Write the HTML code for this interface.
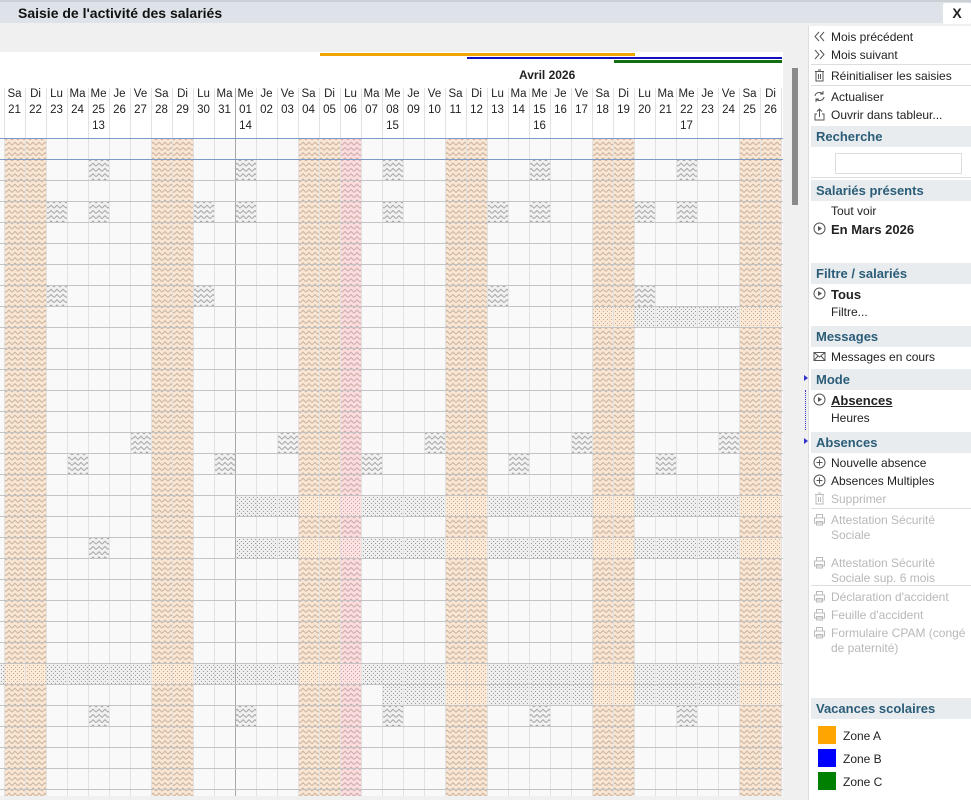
<!DOCTYPE html>
<html><head><meta charset="utf-8">
<style>
*{margin:0;padding:0;box-sizing:border-box}
html,body{width:971px;height:800px;overflow:hidden}
body{background:#f0f0f0;font-family:"Liberation Sans",sans-serif;position:relative;font-size:12px;color:#222}
.abs{position:absolute}
#title{left:0;top:0;width:971px;height:23px;background:#dde3e8;border-top:2px solid #c9d0d6}
#title span{position:absolute;left:18px;top:3px;font-weight:bold;font-size:14px;color:#111}
#x{right:0;top:1px;width:28px;height:21px;background:#fff;font-weight:bold;font-size:14px;text-align:center;line-height:21px;border-radius:2px}
#grid{left:0;top:52px;width:783px;height:744px;background:#fff;overflow:hidden}
.hd{position:absolute;font-size:11.5px;color:#222;width:21px;text-align:center}
#side{left:808px;top:26px;width:163px;height:774px;background:#fff;border-left:1px solid #ddd;overflow:hidden}
.it{position:absolute;left:22px;font-size:12px;white-space:nowrap;line-height:15px}
.dis{color:#b8b8b8}
.sh{position:absolute;left:2px;width:161px;height:21px;background:#e8ecef;color:#2b5d78;font-weight:bold;font-size:13px;padding-left:5px;line-height:21px}
.sep{position:absolute;left:2px;width:161px;height:1px;background:#ddd}
.ic{position:absolute;left:4px;width:13px;height:13px}
.sw{position:absolute;left:9px;width:18px;height:18px}
</style></head><body>
<div id="title" class="abs"><span>Saisie de l'activité des salariés</span><div id="x" class="abs">X</div></div>
<div id="grid" class="abs">
<div class="abs" style="left:320px;top:1px;width:315px;height:3px;background:#f0a500"></div>
<div class="abs" style="left:467px;top:5px;width:315px;height:2px;background:#1010c0"></div>
<div class="abs" style="left:614px;top:8px;width:168px;height:3px;background:#107010"></div>
<div class="abs" style="left:519px;top:16px;font-weight:bold;font-size:12px">Avril 2026</div>
<div id="hdr"></div>
<svg id="sv" class="abs" style="left:0;top:0" width="783" height="744"></svg>
</div>
<div class="abs" style="left:792px;top:68px;width:6px;height:137px;background:#8a8a8a"></div>
<div id="side" class="abs">
<svg class="ic" style="top:4px" viewBox="0 0 13 13"><path d="M6 2L2 6.5 6 11M11 2L7 6.5 11 11" fill="none" stroke="#555"/></svg><div class="it" style="top:4px">Mois précédent</div>
<svg class="ic" style="top:22px" viewBox="0 0 13 13"><path d="M2 2L6 6.5 2 11M7 2L11 6.5 7 11" fill="none" stroke="#555"/></svg><div class="it" style="top:22px">Mois suivant</div>
<div class="sep" style="top:38px"></div>
<svg class="ic" style="top:43px" viewBox="0 0 13 13"><path d="M2 2.5H11M5 1H8M3 2.5V12H10V2.5M5.5 5V10M7.5 5V10" fill="none" stroke="#555"/></svg><div class="it" style="top:43px">Réinitialiser les saisies</div>
<div class="sep" style="top:59px"></div>
<svg class="ic" style="top:64px" viewBox="0 0 13 13"><path d="M2 6A4.5 4 0 0 1 10 4M11 7A4.5 4 0 0 1 3 9M10 1V4H7M3 12V9H6" fill="none" stroke="#555"/></svg><div class="it" style="top:64px">Actualiser</div>
<svg class="ic" style="top:82px" viewBox="0 0 13 13"><path d="M4 6H2V12H11V6H9M6.5 9V1M4 3.5L6.5 1 9 3.5" fill="none" stroke="#555"/></svg><div class="it" style="top:82px">Ouvrir dans tableur...</div>
<div class="sh" style="top:100px">Recherche</div>
<div class="abs" style="left:26px;top:127px;width:127px;height:21px;border:1px solid #ddd;background:#fff"></div>
<div class="sep" style="top:151px"></div>
<div class="sh" style="top:154px">Salariés présents</div>
<div class="it" style="top:178px">Tout voir</div>
<svg class="ic" style="top:196px" viewBox="0 0 13 13"><circle cx="6.5" cy="6.5" r="5.5" fill="none" stroke="#555"/><path d="M5 4L9 6.5 5 9Z" fill="#555"/></svg><div class="it" style="top:196px;font-weight:bold;font-size:13px">En Mars 2026</div>
<div class="sh" style="top:237px">Filtre / salariés</div>
<svg class="ic" style="top:261px" viewBox="0 0 13 13"><circle cx="6.5" cy="6.5" r="5.5" fill="none" stroke="#555"/><path d="M5 4L9 6.5 5 9Z" fill="#555"/></svg><div class="it" style="top:261px;font-weight:bold;font-size:13px">Tous</div>
<div class="it" style="top:279px">Filtre...</div>
<div class="sh" style="top:300px">Messages</div>
<svg class="ic" style="top:324px" viewBox="0 0 13 13"><path d="M1 2.5H12V10.5H1ZM1 2.5L6.5 7 12 2.5M1 10.5L5 6M12 10.5L8 6" fill="none" stroke="#555"/></svg><div class="it" style="top:324px">Messages en cours</div>
<div class="sh" style="top:343px">Mode</div>
<svg class="ic" style="top:367px" viewBox="0 0 13 13"><circle cx="6.5" cy="6.5" r="5.5" fill="none" stroke="#555"/><path d="M5 4L9 6.5 5 9Z" fill="#555"/></svg><div class="it" style="top:367px;font-weight:bold;font-size:13px;text-decoration:underline">Absences</div>
<div class="it" style="top:385px">Heures</div>
<div class="sh" style="top:406px">Absences</div>
<svg class="ic" style="top:430px" viewBox="0 0 13 13"><circle cx="6.5" cy="6.5" r="5.5" fill="none" stroke="#555"/><path d="M6.5 3.5V9.5M3.5 6.5H9.5" stroke="#555"/></svg><div class="it" style="top:430px">Nouvelle absence</div>
<svg class="ic" style="top:448px" viewBox="0 0 13 13"><circle cx="6.5" cy="6.5" r="5.5" fill="none" stroke="#555"/><path d="M6.5 3.5V9.5M3.5 6.5H9.5" stroke="#555"/></svg><div class="it" style="top:448px">Absences Multiples</div>
<svg class="ic" style="top:466px" viewBox="0 0 13 13"><path d="M2 2.5H11M5 1H8M3 2.5V12H10V2.5M5.5 5V10M7.5 5V10" fill="none" stroke="#bbb"/></svg><div class="it dis" style="top:466px">Supprimer</div>
<div class="sep" style="top:482px"></div>
<div id="pr"></div>
<div class="it dis" style="top:487px">Attestation Sécurité<br>Sociale</div>
<div class="it dis" style="top:530px">Attestation Sécurité<br>Sociale sup. 6 mois</div>
<div class="sep" style="top:559px"></div>
<div class="it dis" style="top:564px">Déclaration d'accident</div>
<div class="it dis" style="top:582px">Feuille d'accident</div>
<div class="it dis" style="top:600px">Formulaire CPAM (congé<br>de paternité)</div>
<div class="sh" style="top:672px">Vacances scolaires</div>
<div class="sw" style="top:700px;background:#ffa500"></div><div class="it" style="left:34px;top:703px">Zone A</div>
<div class="sw" style="top:723px;background:#0000ff"></div><div class="it" style="left:34px;top:726px">Zone B</div>
<div class="sw" style="top:746px;background:#008000"></div><div class="it" style="left:34px;top:749px">Zone C</div>
</div>
<div class="abs" style="left:804px;top:375px;width:0;height:0;border-left:4px solid #33c;border-top:3px solid transparent;border-bottom:3px solid transparent"></div>
<div class="abs" style="left:804px;top:438px;width:0;height:0;border-left:4px solid #33c;border-top:3px solid transparent;border-bottom:3px solid transparent"></div>
<div class="abs" style="left:805px;top:390px;height:40px;border-left:1px dotted #33c"></div>
<script>
var names=["Sa","Di","Lu","Ma","Me","Je","Ve"];
var nums=[21,22,23,24,25,26,27,28,29,30,31];for(var d=1;d<=26;d++)nums.push(d);
var wk={4:"13",11:"14",18:"15",25:"16",32:"17"};
var h="";
for(var i=0;i<37;i++){var x=4+21*i;var n=nums[i];var s=(n<10?"0":"")+n;
h+='<div class="hd" style="left:'+x+'px;top:36px">'+names[i%7]+'</div>';
h+='<div class="hd" style="left:'+x+'px;top:52px">'+s+'</div>';
if(wk[i])h+='<div class="hd" style="left:'+x+'px;top:68px">'+wk[i]+'</div>';}
document.getElementById("hdr").innerHTML=h;
var pp="";[487,530,564,582,600].forEach(function(t){pp+='<svg class="ic" style="top:'+t+'px" viewBox="0 0 13 13"><path d="M3.5 5V1.5H9.5V5M1.5 5H11.5V10H1.5ZM3.5 8.5H9.5V12H3.5Z" fill="none" stroke="#bbb"/></svg>'});
document.getElementById("pr").innerHTML=pp;
var Y0=86,RH=21,NR=34;
function zz(id,bg,st){return '<pattern id="'+id+'" width="6" height="5.25" patternUnits="userSpaceOnUse"><rect width="6" height="5.25" fill="'+bg+'"/><path d="M0 4L3 1 6 4" fill="none" stroke="'+st+'" stroke-width="1"/></pattern>';}
function dd(id,bg,st){return '<pattern id="'+id+'" width="4" height="4" patternUnits="userSpaceOnUse"><rect width="4" height="4" fill="'+bg+'"/><rect x="1" y="1" width="1" height="1" fill="'+st+'"/><rect x="3" y="3" width="1" height="1" fill="'+st+'"/></pattern>';}
var sv='<defs>'+zz("zo","#fae6d2","#c4b19c")+zz("zp","#fcdcdc","#c7a8a8")+zz("zg","#f2f2f2","#a2a2a2")+dd("dg","#efefef","#9a9a9a")+dd("do","#fbe9d6","#c0ac98")+dd("dp","#fde0e0","#c0a8a8")+'</defs>';
sv+='<rect x="0" y="'+Y0+'" width="783" height="700" fill="#f9f9f9"/>';
var grayZ={1:[4,11,18,25,32],3:[2,4,9,11,16,18,23,25,30,32],7:[2,9,23,30],14:[6,13,20,27,34],15:[3,10,17,24,31],19:[4],27:[4,11,18,25,32]};
var dotted={8:[28,36],17:[11,36],19:[11,36],25:[0,36],26:[18,36]};
function wkend(i){return i%7==0||i%7==1}
for(var r=0;r<NR;r++){var y=Y0+r*RH;
 for(var i=-1;i<37;i++){var x=4+21*i;var f=null;
  var dt=dotted[r]&&i>=dotted[r][0]&&i<=dotted[r][1];
  if(i==-1){if(r==25)f="dg";else continue;x=0;}
  else if(dt)f=(i==16?"dp":(wkend(i)?"do":"dg"));
  else if(i==16)f="zp";else if(wkend(i))f="zo";
  else if(grayZ[r]&&grayZ[r].indexOf(i)>=0)f="zg";
  if(f)sv+='<rect x="'+x+'" y="'+y+'" width="'+(i==-1?4:21)+'" height="'+RH+'" fill="url(#'+f+')"/>';}
}
for(var i=0;i<=37;i++){var x=4.5+21*i;sv+='<line x1="'+x+'" y1="36" x2="'+x+'" y2="744" stroke="'+(i==11?"#a8a8a8":"#e2e2e2")+'"/>';}
for(var r=1;r<NR;r++){var y=Y0+r*RH+0.5;sv+='<line x1="0" y1="'+y+'" x2="783" y2="'+y+'" stroke="'+(r==1?"#7d99c6":"#c4c4c4")+'"/>';}
sv+='<line x1="0" y1="'+(Y0+0.5)+'" x2="783" y2="'+(Y0+0.5)+'" stroke="#7d99c6"/>';
document.getElementById("sv").innerHTML=sv;
</script>
</body></html>
